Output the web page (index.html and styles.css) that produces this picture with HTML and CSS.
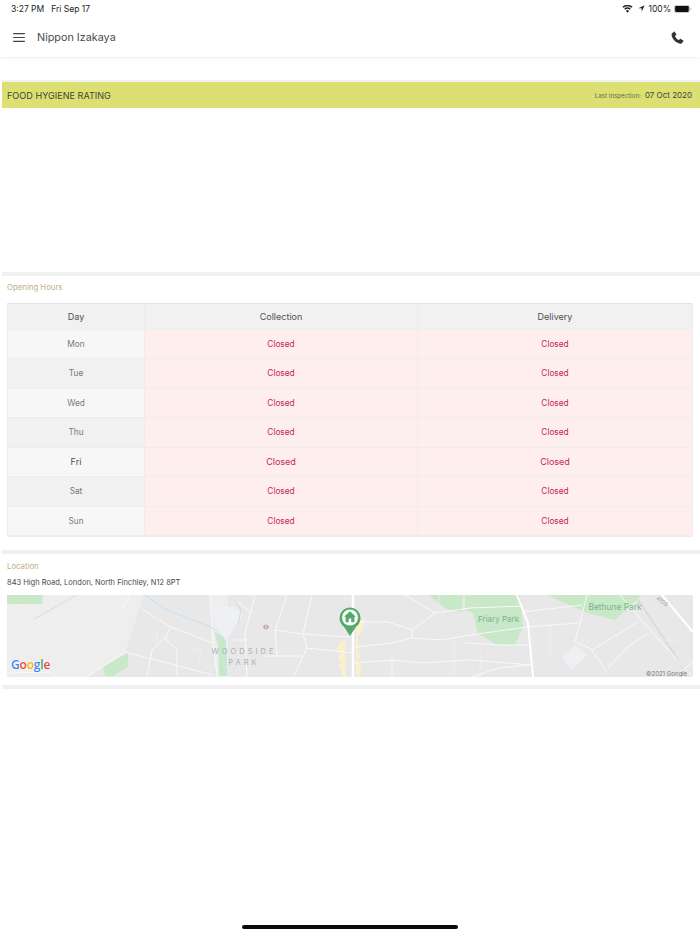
FILE: index.html
```html
<!DOCTYPE html>
<html lang="en">
<head>
<meta charset="utf-8">
<title>Nippon Izakaya</title>
<link rel="stylesheet" href="styles.css">
</head>
<body>
<div class="page">
  <div class="status">
    <span class="status-time">3:27 PM</span><span class="status-date">Fri Sep 17</span>
    <div class="status-right">
      <svg class="wifi" viewBox="0 0 16 12"><path d="M8 11.5 5.6 8.6a3.8 3.8 0 0 1 4.8 0zM4.4 7.3 3 5.6a7.8 7.8 0 0 1 10 0l-1.4 1.7a5.6 5.6 0 0 0-7.2 0zM1.9 4.3.4 2.6a11.8 11.8 0 0 1 15.200 0l-1.500 1.700a9.500 9.500 0 0 0-12.200 0z"/></svg>
      <svg class="loc" viewBox="0 0 10 10"><path d="M9.500.5.500 4.800h4.700v4.700z"/></svg>
      <span>100%</span>
      <svg class="batt" viewBox="0 0 25 11"><rect class="batt-shell" x=".5" y=".5" width="21" height="10" rx="2.500"/><rect x="1.500" y="1.500" width="19" height="8" rx="1.500"/><path class="batt-tip" d="M23 3.800c.8.300 1.300 1 1.300 1.700s-.5 1.400-1.300 1.700z"/></svg>
    </div>
  </div>
  <header class="topbar">
    <svg class="menu" viewBox="0 0 13 10"><path d="M0 .7h13M0 5h13M0 9.300h13"/></svg>
    <span class="title">Nippon Izakaya</span>
    <svg class="phone" viewBox="0 0 14 14"><path d="M1.200 2.500 3.300.7c.3-.2.600-.2.800.1l1.500 2.700c.2.300.1.600-.1.800L4.300 5.300c.7 1.800 2.300 3.600 4.300 4.500l1-1.200c.2-.3.600-.3.900-.1l2.700 1.700c.3.200.3.500.1.800l-1.700 2.200c-.4.500-.9.700-1.500.6C5 12.600 1.300 8.900.6 4c-.1-.6.100-1.100.6-1.500z"/></svg>
  </header>

  <div class="rule rule-hygiene"></div>
  <section class="hygiene">
    <span class="hygiene-title">FOOD HYGIENE RATING</span>
    <span class="hygiene-meta"><span class="hygiene-label">Last Inspection:</span><span class="hygiene-date">07 Oct 2020</span></span>
  </section>
  <div class="hygiene-body"></div>

  <div class="rule"></div>
  <section class="hours">
    <h2 class="section-label">Opening Hours</h2>
    <div class="table">
      <div class="cell head day">Day</div><div class="cell head">Collection</div><div class="cell head">Delivery</div>
      <div class="cell day odd">Mon</div><div class="cell closed">Closed</div><div class="cell closed">Closed</div>
      <div class="cell day even">Tue</div><div class="cell closed">Closed</div><div class="cell closed">Closed</div>
      <div class="cell day odd">Wed</div><div class="cell closed">Closed</div><div class="cell closed">Closed</div>
      <div class="cell day even">Thu</div><div class="cell closed">Closed</div><div class="cell closed">Closed</div>
      <div class="cell day odd today">Fri</div><div class="cell closed today">Closed</div><div class="cell closed today">Closed</div>
      <div class="cell day even">Sat</div><div class="cell closed">Closed</div><div class="cell closed">Closed</div>
      <div class="cell day odd">Sun</div><div class="cell closed">Closed</div><div class="cell closed">Closed</div>
    </div>
  </section>

  <div class="rule"></div>
  <section class="location">
    <h2 class="section-label">Location</h2>
    <p class="address">843 High Road, London, North Finchley, N12 8PT</p>
    <div class="map">
      <svg class="map-art" viewBox="7 595 686 82" preserveAspectRatio="none">
        <path class="m-dark" d="M120 595h90l3 48 4 34H88l37-25 20-60z"/>
        <path class="m-dark" d="M228 595H693v82H228z"/>
        <g class="m-green">
          <path d="M7 595h36l-1 9H7z"/>
          <path d="M103 667l25-14v14l-15 9h-8z"/>
          <path d="M214 632l12 6 1 38h-8l-1-30z"/>
          <path d="M428 595l20 15 14 2 1-17z"/>
          <path d="M465 595h55l3 32-8 18h-18l-19-12-5-20-8-3z"/>
          <path d="M548 595h94l-27 25-27-7-26-11z"/>
        </g>
        <path class="m-pale" d="M213 612l3-5h19l8 8-8 12-9 14-8-12z"/>
        <path class="m-pale" d="M562 657l13-12 12 10-15 15z"/>
        <path class="m-yellow" d="M340 642l6-2v8l-2 4 2 6v19h-4v-7l-3-2 2-6-3-3 3-7-4-3z"/>
        <path class="m-yellow" d="M356 622l9-3-2 10-5 8v12l2 7-2 6 3 6-1 9h-4z"/>
        <path class="m-rail" d="M635 595l50 75"/>
        <g class="m-road-thin">
          <path d="M15 605h9l2 30-6 4-6-4zM95 615l-15 40-18 20M145 623l12 8v15M190 647l11 4-3 12M440 595l-4 18M454 640v37M480 650v27M550 620v35l-20 15M655 640h25M640 595l20 30M605 620l-20 25"/>
        </g>
        <g class="m-road">
          <path d="M88 676l37-24 88 23M147 676l5-26 13-12 12 12v26M165 638l6-11 42 16M142 609l28 18M210 595l3 48 4 32M7 673l43-1 5 4"/>
          <path d="M255 595l-10 38 2 44M287 595l-12 35 2 27M312 595l-9 39 4 14-14 29M235 600l17 13M275 630l28 4 47 3M307 648l45 5M263 656l39 0"/>
          <path d="M355 622h33l24 8 23-17 35-5 53-2M412 630v8l-20 5-37 4M412 638l30 2 28-5 58-8M355 663l37-3 30 3 48-3 62 5M392 660v17M405 595l30 18"/>
          <path d="M523 612l59-7M528 627l50-4M587 595l-12 47 15 6 18 25M592 650l46-28M608 668l20-21 20-14M620 595l32 37 41 45M465 643l32 2 31 0M472 677l26-9 32-3"/>
          <path d="M675 677l18-15M130 595l-8 14M235 640l10 0"/>
        </g>
        <g class="m-river">
          <path d="M34 619l43-24M145 595l18 13 24 10 26 10 12 12 2 36"/>
          <path d="M235 600l6 10-3 14"/>
          <path d="M483 612l8 16 14 10"/>
        </g>
        <path class="m-trunk" d="M353 595v82"/>
        <path class="m-trunk-2" d="M517 595l11 28 5 54"/>
        <path class="m-trunk-2" d="M662 595l31 37"/>
        <circle class="m-tube" cx="266" cy="627" r="2"/>
        <path class="m-tube-bar" d="M263.500 627h5"/>
        <text class="m-area" x="244" y="654" text-anchor="middle">WOODSIDE</text>
        <text class="m-area" x="244" y="665" text-anchor="middle">PARK</text>
        <text class="m-park" x="478" y="622">Friary Park</text>
        <text class="m-park m-park-wide" x="588.500" y="610">Bethune Park</text>
        <text class="m-ref" transform="translate(656 599) rotate(38)">A109</text>
        <text class="m-copy" x="646" y="676">©2021 Google</text>
      </svg>
      <span class="google"><span class="g-b">G</span><span class="g-r">o</span><span class="g-y">o</span><span class="g-b">g</span><span class="g-g">l</span><span class="g-r">e</span></span>
      <svg class="pin" viewBox="0 0 22 29">
        <path class="pin-body" d="M11 29 5 19.700A10.500 10.500 0 1 1 17 19.700z"/>
        <circle class="pin-ring" cx="11" cy="10.500" r="8"/>
        <path class="pin-body" d="M11 4.200 17 9.800h-1.600v5.400h-3.100v-3.700H9.700v3.700H6.600V9.800H5z"/>
      </svg>
    </div>
  </section>
  <div class="rule rule-end"></div>
  <div class="spacer"></div>
  <div class="home"></div>
</div>
</body>
</html>
```
FILE: styles.css
```css
* { box-sizing: border-box; }
html, body { margin: 0; padding: 0; background: #fff; }
body { font-family: "Inter", "Liberation Sans", sans-serif; color: #333; }
.page { width: 700px; height: 934px; display: flex; flex-direction: column; overflow: hidden; position: relative; }

.status { height: 17px; padding: 0 8px 0 11px; display: flex; align-items: center; font-size: 8.500px; color: #222; }
.status-time { margin-right: 7px; }
.status-right { margin-left: auto; display: flex; align-items: center; gap: 3px; }
.wifi { width: 11px; height: 8px; fill: #222; }
.loc { width: 7px; height: 7px; fill: #222; margin-left: 2px; }
.batt { width: 18px; height: 8px; fill: #111; }
.batt-shell { fill: none; stroke: #aaa; }
.batt-tip { fill: #aaa; }

.topbar { height: 40px; display: flex; align-items: center; padding: 0 16px 0 13px; box-shadow: 0 1px 3px rgba(0,0,0,.08); margin-bottom: 23px; }
.menu { width: 12px; height: 9px; fill: none; stroke: #444; stroke-width: 1.200; }
.title { margin-left: 12px; font-size: 10.800px; color: #4a4a4a; }
.phone { margin-left: auto; width: 13px; height: 13px; fill: #333; }

.rule { height: 4px; background: #f0f0f0; margin-left: 2px; flex: none; }
.rule-hygiene { height: 2px; }
.hygiene { height: 26px; margin-left: 2px; background: #dcdf71; display: flex; align-items: center; justify-content: space-between; padding: 0 8px 0 5px; }
.hygiene-title { font-size: 9.100px; color: #44443a; }
.hygiene-meta { display: flex; align-items: center; gap: 4px; }
.hygiene-label { font-size: 6.200px; color: #6b6c50; }
.hygiene-date { font-size: 8px; color: #44443a; }
.hygiene-body { height: 164px; }

.section-label { margin: 0; font-size: 7.800px; font-weight: 400; line-height: 11px; color: #bfae8a; }
.hours { padding: 6px 7px 0; height: 274px; }
.hours .section-label { margin-bottom: 10px; }
.table { display: grid; grid-template-columns: 137px 273px 274px; grid-template-rows: 25.500px repeat(7, 29.500px); width: 686px; border-top: 1px solid #e2e2e2; border-left: 1px solid #ececec; border-bottom: 1px solid #ececec; border-right: 1px solid #ececec; }
.cell { display: flex; align-items: center; justify-content: center; font-size: 8.300px; border-right: 1px solid #ededed; border-bottom: 1px solid #ededed; }
.cell:nth-child(3n) { border-right: 0; }
.head { background: #f1f1f1; font-size: 9px; color: #505050; }
.head.day { color: #505050; font-size: 9px; }
.day { color: #777; }
.odd { background: #f7f7f7; }
.even { background: #f1f1f1; }
.closed { background: #ffeeee; color: #c41f52; }
.today { font-size: 9px; }
.day.today { color: #505050; }

.location { padding: 7px 7px 0; }
.location .section-label { margin-bottom: 5px; }
.address { margin: 0 0 6px; font-size: 7.500px; line-height: 12px; color: #4a4a4a; }
.map { position: relative; height: 82px; background: #eeeeee; overflow: hidden; margin-bottom: 8px; }
.map-art { display: block; width: 686px; height: 82px; }
.m-green path { fill: #c9e8c8; }
.m-dark { fill: #e8e8e8; }
.m-pale { fill: #eef0f3; }
.m-yellow { fill: #fcf0cc; }
.m-rail { fill: none; stroke: #d9d9db; stroke-width: 1.500; }
.m-road path { fill: none; stroke: #fafafa; stroke-width: .9; }
.m-road-thin path { fill: none; stroke: #f3f3f3; stroke-width: .6; }
.m-river path { fill: none; stroke: #c4e0f5; stroke-width: 1; }
.m-trunk { fill: none; stroke: #fff; stroke-width: 2.500; }
.m-trunk-2 { fill: none; stroke: #fff; stroke-width: 2; }
.m-tube { fill: #fff; stroke: #c9798a; stroke-width: .8; }
.m-tube-bar { stroke: #7580b8; stroke-width: .8; }
.m-area { font-size: 7.500px; letter-spacing: 3px; fill: #a8b0be; }
.m-park { font-size: 8px; fill: #76b68a; }
.m-park-wide { font-size: 8.400px; }
.m-ref { font-size: 5.500px; fill: #a2a2a2; }
.m-copy { font-size: 6px; fill: #777; }

.google { position: absolute; left: 4px; top: 62px; font-family: "Open Sans", sans-serif; font-size: 12px; line-height: 16px; font-weight: 600; letter-spacing: -.2px; text-shadow: 0 0 1px #fff, 0 0 2px #fff; }
.g-b { color: #4285f4; }
.g-r { color: #ea4335; }
.g-y { color: #f5b400; }
.g-g { color: #34a853; }

.pin { position: absolute; left: 332px; top: 12px; width: 22px; height: 29px; }
.pin-body { fill: #55a96b; }
.pin-ring { fill: #fff; }

.rule-end { flex: none; }
.spacer { flex: 1; }
.home { position: absolute; left: 242px; top: 925px; width: 216px; height: 4px; border-radius: 2px; background: #0a0a0a; }
```
